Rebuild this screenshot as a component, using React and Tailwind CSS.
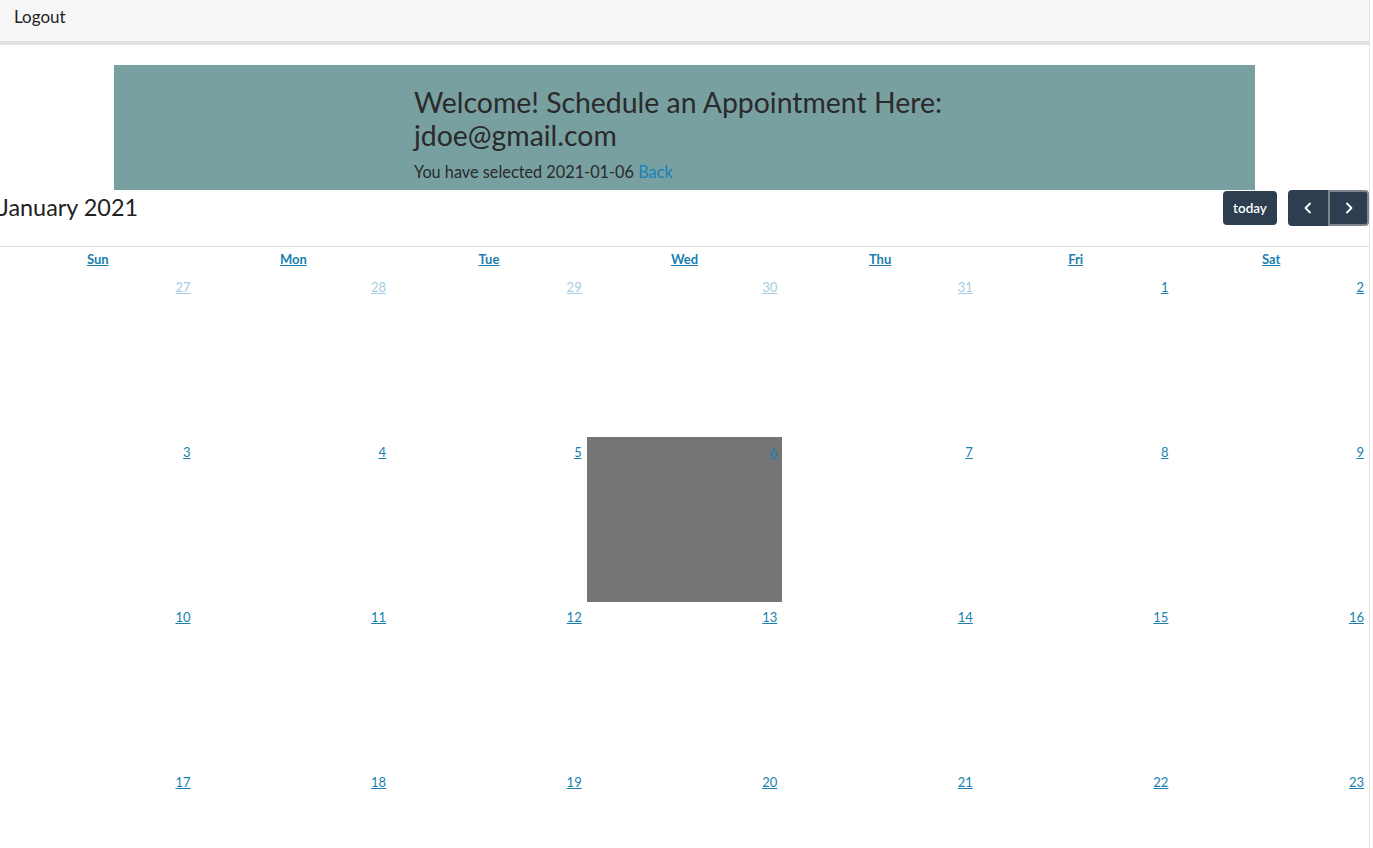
import React from "react";

const weeks = [
  [
    { d: 27, other: true },
    { d: 28, other: true },
    { d: 29, other: true },
    { d: 30, other: true },
    { d: 31, other: true },
    { d: 1 },
    { d: 2 },
  ],
  [{ d: 3 }, { d: 4 }, { d: 5 }, { d: 6, selected: true }, { d: 7 }, { d: 8 }, { d: 9 }],
  [{ d: 10 }, { d: 11 }, { d: 12 }, { d: 13 }, { d: 14 }, { d: 15 }, { d: 16 }],
  [{ d: 17 }, { d: 18 }, { d: 19 }, { d: 20 }, { d: 21 }, { d: 22 }, { d: 23 }],
];

const dayNames = ["Sun", "Mon", "Tue", "Wed", "Thu", "Fri", "Sat"];

function Chevron({ dir }) {
  return (
    <svg width="16" height="16" viewBox="0 0 16 16" fill="none">
      <path
        d={dir === "left" ? "M10 3.5 L5.5 8 L10 12.5" : "M6 3.5 L10.5 8 L6 12.5"}
        stroke="white"
        strokeWidth="1.8"
        strokeLinecap="round"
        strokeLinejoin="round"
      />
    </svg>
  );
}

export default function App() {
  return (
    <div
      className="min-h-screen bg-white text-[#222] overflow-hidden"
      style={{ fontFamily: "Lato, 'Open Sans', sans-serif" }}
    >
      <div className="w-[1370px] border-r border-[#e4e4e4] min-h-screen">
        {/* navbar */}
        <div className="h-[45px] bg-[#f7f7f7] border-b-4 border-[#e2e2e2] flex items-center px-[14px]">
          <span className="text-[17px] text-[#222] -mt-[8px]">Logout</span>
        </div>

        {/* banner */}
        <div className="mt-[20px] mx-[114px] h-[125px] bg-[#78a0a1] pl-[300px] pt-[21px]">
          <h1 className="text-[28.4px] leading-[33px] text-[#2a2a2a] w-[560px]">
            Welcome! Schedule an Appointment Here: jdoe@gmail.com
          </h1>
          <p className="mt-[10px] text-[16.3px] leading-[20px] text-[#2a2a2a]">
            You have selected 2021-01-06{" "}
            <a className="text-[#1780b8] cursor-pointer">Back</a>
          </p>
        </div>

        {/* toolbar */}
        <div className="flex items-center justify-between h-[36px]">
          <h2 className="text-[23.4px] text-[#222] -ml-[1px]">January 2021</h2>
          <div className="flex items-center">
            <button className="h-[34px] w-[54px] rounded-[4px] bg-[#2c3e50] text-white text-[13.5px] font-semibold">
              today
            </button>
            <div className="ml-[11px] flex">
              <button className="w-[40px] h-[36px] rounded-l-[4px] bg-[#2c3e50] flex items-center justify-center">
                <Chevron dir="left" />
              </button>
              <button className="w-[41px] h-[36px] rounded-r-[4px] bg-[#2c3e50] border-2 border-[#7f868e] flex items-center justify-center">
                <Chevron dir="right" />
              </button>
            </div>
          </div>
        </div>

        {/* calendar */}
        <div className="mt-[20px] border-t border-[#dcdcdc]">
          <div className="grid grid-cols-7 h-[25px] items-center -mt-[2px] mb-[2px]">
            {dayNames.map((n) => (
              <div key={n} className="text-center">
                <a className="text-[13px] font-bold underline text-[#1a7fae]">{n}</a>
              </div>
            ))}
          </div>
          {weeks.map((w, i) => (
            <div key={i} className="grid grid-cols-7 h-[165px]">
              {w.map((c) => (
                <div
                  key={c.d + (c.other ? "o" : "")}
                  className={`flex justify-end pr-[5px] pt-[6px] ${
                    c.selected ? "bg-[#757575]" : ""
                  }`}
                >
                  <a
                    className={`text-[13px] underline h-[16px] ${
                      c.other ? "text-[#a3cde0]" : "text-[#1a7fae]"
                    }`}
                  >
                    {c.d}
                  </a>
                </div>
              ))}
            </div>
          ))}
        </div>
      </div>
    </div>
  );
}
